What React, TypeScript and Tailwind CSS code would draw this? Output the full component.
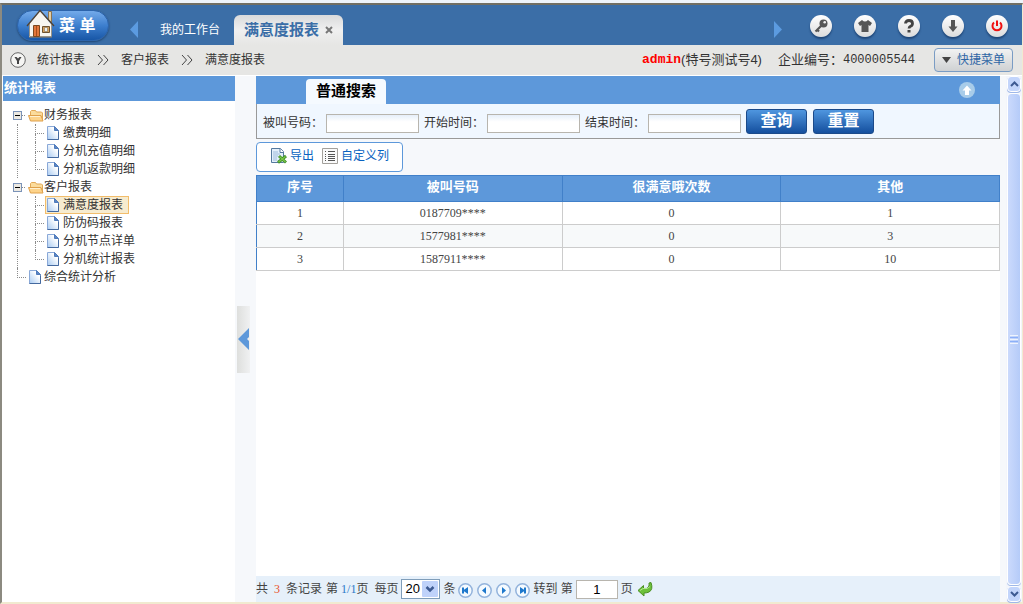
import { useState, type ReactNode } from 'react';

type Page = { id: string; name: string };
type Folder = { id: string; name: string; children: Page[] };

const folders: Folder[] = [
  {
    id: 'finance',
    name: '财务报表',
    children: [
      { id: 'payment', name: '缴费明细' },
      { id: 'recharge', name: '分机充值明细' },
      { id: 'refund', name: '分机返款明细' },
    ],
  },
  {
    id: 'customer',
    name: '客户报表',
    children: [
      { id: 'satisfaction', name: '满意度报表' },
      { id: 'anti-fake', name: '防伪码报表' },
      { id: 'node', name: '分机节点详单' },
      { id: 'extension', name: '分机统计报表' },
    ],
  },
];

const rows = [
  { id: 1, phone: '0187709****', satisfied: 0, other: 1 },
  { id: 2, phone: '1577981****', satisfied: 0, other: 3 },
  { id: 3, phone: '1587911****', satisfied: 0, other: 10 },
];

const filters = [
  { id: 'called', label: '被叫号码：' },
  { id: 'start', label: '开始时间：' },
  { id: 'end', label: '结束时间：' },
];

function HouseIcon() {
  return (
    <svg width="30" height="30" viewBox="0 0 30 30" aria-hidden="true">
      <path d="M22.500 2.500h3V14l-3-3z" fill="#e4cfa6" stroke="#8a7350" />
      <path d="M3 15 14 2l11 13v13H3z" fill="#f7f5ef" />
      <path d="M3.500 15v12.500h22V15" fill="none" stroke="#9a9488" />
      <path d="M1 17 14 1.500 28 17" fill="none" stroke="#4f4234" strokeWidth="1.300" />
      <path d="M7.500 16.500h6v11h-6z" fill="#e2763a" stroke="#7c4a22" />
      <path d="M10.500 17v10" stroke="#a94e1c" />
      <path d="M16.500 17.500h7v6h-7z" fill="#d9a158" stroke="#6d5231" />
      <path d="M18.500 18.500h3v4h-3z" fill="#e6eef5" stroke="#8a7350" strokeWidth=".6" />
      <path d="M3 28.500h23" stroke="#5d6d80" />
    </svg>
  );
}

function PageIcon() {
  return (
    <svg width="12" height="14" viewBox="0 0 12 14" className="shrink-0" aria-hidden="true">
      <defs>
        <linearGradient id="sheet" x1="1" y1="0" x2="0" y2="1">
          <stop offset="0.3" stopColor="#ffffff" />
          <stop offset="1" stopColor="#a9cbf2" />
        </linearGradient>
      </defs>
      <path d="M.5.5h7l4 4v9H.5z" fill="url(#sheet)" stroke="#8aa9d8" />
      <path d="M7.500.5v4h4z" fill="#5b86c4" stroke="#4f7abb" />
      <path d="M.5 13.500h11v-8" fill="none" stroke="#44699f" />
    </svg>
  );
}

function FolderIcon() {
  return (
    <svg width="16" height="13" viewBox="0 0 16 13" className="shrink-0" aria-hidden="true">
      <path d="M2.500 6V2.500l1-1h4l1 1.500h5l1 1V11" fill="#fbdc9c" stroke="#e3a956" />
      <path d="M.5 6.500h12.500l2 5.500H2.500z" fill="#fdd38a" stroke="#dfa04b" />
      <path d="M2 7.500h10" stroke="#fff1cf" />
    </svg>
  );
}

// vertical line with a branch to the right at half height
function Branch({ last = false, width }: { last?: boolean; width: string }) {
  return (
    <span className={`flex h-[18px] shrink-0 flex-col ${width}`}>
      <span className="h-[10px] border-b border-l border-dotted border-[#8c8c8c]" />
      {!last && <span className="h-2 border-l border-dotted border-[#8c8c8c]" />}
    </span>
  );
}

function RoundButton({ label, children }: { label: string; children: ReactNode }) {
  return (
    <button
      type="button"
      aria-label={label}
      className="flex size-[22px] items-center justify-center rounded-full bg-gradient-to-b from-white to-[#dcdcdc] shadow-[0_2px_2px_#1f4677]"
    >
      <svg width="16" height="16" viewBox="0 0 16 16" aria-hidden="true">
        {children}
      </svg>
    </button>
  );
}

function PagerButton({ label, d }: { label: string; d: string }) {
  return (
    <button type="button" aria-label={label} className="size-[15px]">
      <svg width="15" height="15" viewBox="0 0 15 15" aria-hidden="true">
        <circle cx="7.5" cy="7.5" r="6.7" fill="#f4faff" stroke="#93b3dc" strokeWidth="1.500" />
        <path d={d} fill="#1e78cc" />
      </svg>
    </button>
  );
}

function TopBar() {
  return (
    <header className="flex h-10 shrink-0 bg-[#3b6ea7] pl-[15px] pr-[14px]">
      <button
        type="button"
        className="mt-[5px] flex h-[31px] w-[92px] items-center rounded-full border border-[#2c64ac] bg-gradient-to-b from-[#73aaea] via-[#3d7fce] to-[#1756a6] pl-2 text-base font-bold text-white shadow-[0_1px_2px_#204672]"
      >
        <span className="-mt-1">
          <HouseIcon />
        </span>
        <span className="pl-[3px] whitespace-pre">菜 单</span>
      </button>
      <button type="button" aria-label="向左" className="ml-[21px] mt-2">
        <svg width="9" height="17" viewBox="0 0 9 17" aria-hidden="true">
          <path d="M8 0v17L0 8.500z" fill="#5c9be0" />
        </svg>
      </button>
      <nav className="flex flex-1 items-end">
        <a href="#workbench" className="ml-[21px] pb-1.5 text-xs leading-[18px] text-white">
          我的工作台
        </a>
        <div className="ml-[14px] flex h-[30px] items-center rounded-t-md bg-gradient-to-b from-[#d9dadb] via-[#f0f0f0] to-[#e6e6e4] pl-2.5 pr-2.5">
          <a href="#satisfaction" className="text-[15px] font-bold text-[#3b6ea7]">
            满意度报表
          </a>
          <button type="button" aria-label="关闭" className="ml-1.5">
            <svg width="8" height="8" viewBox="0 0 8 8" aria-hidden="true">
              <path d="m1 1 6 6M7 1 1 7" stroke="#777" strokeWidth="2" />
            </svg>
          </button>
        </div>
      </nav>
      <button type="button" aria-label="向右" className="mr-[28px] mt-2">
        <svg width="9" height="17" viewBox="0 0 9 17" aria-hidden="true">
          <path d="M1 0v17l8-8.500z" fill="#5c9be0" />
        </svg>
      </button>
      <div className="flex items-center gap-[22px] pt-0.5">
        <RoundButton label="修改密码">
          <path d="M9 7 2.500 13.500M3.500 11l2.500 2.500" stroke="#555" strokeWidth="2.200" fill="none" />
          <circle cx="10.500" cy="5.500" r="4" fill="#555" />
          <circle cx="11.700" cy="4.300" r="1.300" fill="#eee" />
        </RoundButton>
        <RoundButton label="更换皮肤">
          <path d="M5 2 1 5l2 3 1.500-1v7h7V7L13 8l2-3-4-3q-3 3-6 0z" fill="#555" />
        </RoundButton>
        <RoundButton label="帮助">
          <path d="M4.500 5.500q0-3 3.500-3t3.500 3q0 2-2 2.800Q8 9 8 10.500" fill="none" stroke="#444" strokeWidth="2.800" />
          <path d="M6.500 12h3v2.500h-3z" fill="#444" />
        </RoundButton>
        <RoundButton label="下载">
          <path d="M6 2h4v6.500h2.500L8 14 3.500 8.500H6z" fill="#555" />
        </RoundButton>
        <RoundButton label="退出">
          <path d="M5 4.500a4.500 4.500 0 1 0 6 0M8 2.500v5.500" fill="none" stroke="#f01010" strokeWidth="2" />
        </RoundButton>
      </div>
    </header>
  );
}

function Breadcrumb() {
  const arrow = (
    <svg width="12" height="10" viewBox="0 0 12 10" aria-hidden="true">
      <path d="m1 0 4.500 5L1 10M6.500 0 11 5l-4.500 5" fill="none" stroke="#444" />
    </svg>
  );
  return (
    <div className="flex h-[30px] shrink-0 items-center bg-[#e6e6e4] pl-2 pr-[9px] text-xs text-[#333]">
      <svg width="16" height="16" viewBox="0 0 16 16" aria-hidden="true">
        <circle cx="8" cy="8" r="7.300" fill="#f5f5f3" stroke="#666" />
        <path d="M4.500 5h2L8 6.500 9.500 5h2L9 9v3H7V9z" fill="#444" />
      </svg>
      <nav className="flex flex-1 items-center gap-3 pl-[11px]">
        <a href="#stat">统计报表</a>
        {arrow}
        <a href="#customer">客户报表</a>
        {arrow}
        <a href="#satisfaction">满意度报表</a>
      </nav>
      <div className="flex items-center text-[13px]">
        <b className="font-['Liberation_Mono','Noto_Sans_CJK_SC',monospace] text-[#f00]">admin</b>
        <span>(特号测试号4)</span>
        <span className="pl-4">企业编号：</span>
        <span className="font-['Liberation_Mono',monospace] text-xs">4000005544</span>
      </div>
      <button
        type="button"
        className="ml-[19px] flex h-6 items-center gap-1.5 rounded-sm border border-[#7a9cc4] bg-gradient-to-b from-[#f2f2f2] to-[#cfd1d3] px-[7px] text-[#2f66a5]"
      >
        <svg width="9" height="6" viewBox="0 0 9 6" aria-hidden="true">
          <path d="M0 0h9L4.500 6z" fill="#444" />
        </svg>
        快捷菜单
      </button>
    </div>
  );
}

function Sidebar() {
  const [selected, setSelected] = useState('satisfaction');
  const [closed, setClosed] = useState<string[]>([]);

  const toggle = (id: string) => {
    setClosed(closed.includes(id) ? closed.filter(item => item !== id) : [...closed, id]);
  };

  return (
    <aside className="w-[232px] shrink-0 bg-white">
      <h2 className="h-[25px] bg-[#5d98da] pl-px text-[13px] leading-6 font-bold text-white">统计报表</h2>
      <ul className="pt-[5px] text-xs leading-[18px] text-[#333]">
        {folders.map(folder => (
          <li key={folder.id}>
            <div className="flex h-[18px] items-center pl-2.5">
              <button
                type="button"
                aria-label={folder.name}
                onClick={() => toggle(folder.id)}
                className="flex size-[9px] items-center justify-center border border-[#7b93b8] bg-[#ece9e2]"
              >
                <span className="h-px w-[5px] bg-black" />
              </button>
              <span className="mr-[3px] w-[3px] border-t border-dotted border-[#8c8c8c]" />
              <FolderIcon />
              <span>{folder.name}</span>
            </div>
            {!closed.includes(folder.id) && (
              <ul>
                {folder.children.map((page, i) => (
                  <li key={page.id} className="flex h-[18px] pl-3.5">
                    <span className="w-[18px] border-l border-dotted border-[#8c8c8c]" />
                    <Branch width="w-[9px]" last={i === folder.children.length - 1} />
                    <a
                      href={`#${page.id}`}
                      onClick={() => setSelected(page.id)}
                      className={`ml-px flex h-[18px] items-center gap-1 border pl-px pr-[5px] leading-4 ${
                        selected === page.id ? 'border-[#f2bd6b] bg-[#f6ebcf]' : 'border-transparent'
                      }`}
                    >
                      <PageIcon />
                      {page.name}
                    </a>
                  </li>
                ))}
              </ul>
            )}
          </li>
        ))}
        <li className="flex h-[18px] items-center pl-3.5">
          <Branch width="w-[9px]" last />
          <a href="#analysis" className="flex items-center gap-[3px] pl-[3px]">
            <PageIcon />
            综合统计分析
          </a>
        </li>
      </ul>
    </aside>
  );
}

function SearchPanel() {
  return (
    <section>
      <div className="flex h-7 items-end bg-[#5d98da] pl-[50px] pr-[25px]">
        <h2 className="h-[25px] rounded-t-sm bg-[#f5faff] px-2.5 text-[15px] leading-[23px] font-bold text-black">
          普通搜索
        </h2>
        <button type="button" aria-label="收起" className="mb-1.5 ml-auto">
          <svg width="16" height="16" viewBox="0 0 16 16" aria-hidden="true">
            <circle cx="8" cy="8" r="8" fill="#a8cce9" />
            <path d="m8 3.500 4.500 5H10V13H6V8.500H3.500z" fill="#fff" />
          </svg>
        </button>
      </div>
      <form
        className="flex h-[35px] items-center border-x border-b border-[#999] bg-[#f0f7ff] pl-1.5 text-xs text-[#333]"
        onSubmit={e => e.preventDefault()}
      >
        {filters.map(filter => (
          <div key={filter.id} className="mr-[5px] flex items-center gap-[3px] pt-1">
            <label htmlFor={filter.id}>{filter.label}</label>
            <input
              id={filter.id}
              type="text"
              className="h-[19px] w-[93px] border border-[#b8b5ae] bg-gradient-to-b from-[#e6effa] to-white to-40% px-1"
            />
          </div>
        ))}
        <button
          type="submit"
          className="h-[25px] w-[61px] rounded-[3px] border border-[#1b4a8a] bg-gradient-to-b from-[#4f96df] to-[#144f9e] text-base leading-[22px] font-bold text-white"
        >
          查询
        </button>
        <button
          type="reset"
          className="ml-1.5 h-[25px] w-[61px] rounded-[3px] border border-[#1b4a8a] bg-gradient-to-b from-[#4f96df] to-[#144f9e] text-base leading-[22px] font-bold text-white"
        >
          重置
        </button>
      </form>
    </section>
  );
}

function Toolbar() {
  return (
    <div className="my-[3px] flex h-[30px] w-[147px] items-center rounded-[4px] border border-[#5d98da] bg-white pb-0.5 pl-3.5 text-xs text-[#0a62c0]">
      <button type="button" className="flex items-center gap-[3px]">
        <svg width="16" height="16" viewBox="0 0 16 16" aria-hidden="true">
          <path d="M.5.5h9l3 3v11H.5z" fill="#e3effb" stroke="#55799e" />
          <path d="M9 .5v4h4" fill="#fff" stroke="#55799e" />
          <path d="M2 4h5M2 6h7M2 8h5M2 10h4M2 12h4" stroke="#9dbbdb" />
          <path d="m8 8 7 6.500M15 8l-8 6.500" stroke="#3f8f28" strokeWidth="3" />
          <path d="m8.500 8.500 6 5.500M14.500 8.500l-7 5.500" stroke="#7cc74a" strokeWidth="1.200" />
        </svg>
        导出
      </button>
      <button type="button" className="ml-2 flex items-center gap-[3px]">
        <svg width="16" height="16" viewBox="0 0 16 16" aria-hidden="true">
          <path d="M.5.5h15v15H.5z" fill="#fafafa" stroke="#a3a09b" />
          <path d="M3 3.500h1M3 6.500h1M3 8.500h1M3 10.500h1M3 12.500h1M6 3.500h7M6 6.500h7M6 8.500h7M6 10.500h7M6 12.500h7" stroke="#555" />
        </svg>
        自定义列
      </button>
    </div>
  );
}

function ReportTable() {
  return (
    <table className="w-full table-fixed border-collapse text-center text-xs text-[#444]">
      <colgroup>
        <col className="w-[87px]" />
        <col />
        <col />
        <col />
      </colgroup>
      <thead>
        <tr className="h-[26px] bg-[#5d98da] text-[13px] text-white">
          {['序号', '被叫号码', '很满意哦次数', '其他'].map(title => (
            <th key={title} className="border border-[#4180c9] p-0 pb-1 leading-5 font-bold">
              {title}
            </th>
          ))}
        </tr>
      </thead>
      <tbody className="bg-white font-['Liberation_Serif',serif]">
        {rows.map(row => (
          <tr key={row.id} className="h-[23px] even:bg-[#f7f9fa]">
            <td className="border border-[#ccc] border-l-[#4180c9] p-0">{row.id}</td>
            <td className="border border-[#ccc] p-0">{row.phone}</td>
            <td className="border border-[#ccc] p-0">{row.satisfied}</td>
            <td className="border border-[#ccc] p-0">{row.other}</td>
          </tr>
        ))}
      </tbody>
    </table>
  );
}

function Pager() {
  return (
    <footer className="flex h-[26px] shrink-0 items-center bg-[#e6f0fa] text-xs text-[#444]">
      <span>共</span>
      <span className="px-1.5 font-['Liberation_Serif',serif] text-[#e8532b]">3</span>
      <span>条记录</span>
      <span className="pl-1">第</span>
      <span className="pl-[3px] font-['Liberation_Serif',serif] text-[#2a78c8]">1/1</span>
      <span>页</span>
      <label htmlFor="page-size" className="pl-1.5">
        每页
      </label>
      <div className="relative ml-[3px]">
        <select
          id="page-size"
          className="block h-5 w-[39px] appearance-none border border-[#7f9db9] bg-white pl-[3px] font-['Liberation_Sans',sans-serif] text-[13px] leading-[18px] text-black"
        >
          <option>20</option>
          <option>50</option>
        </select>
        <svg
          width="16"
          height="16"
          viewBox="0 0 16 16"
          className="pointer-events-none absolute top-0.5 right-0.5"
          aria-hidden="true"
        >
          <rect width="16" height="16" rx="1" fill="#bfd2fa" />
          <path d="m4.500 6 3.500 3.500L11.500 6" fill="none" stroke="#3d5a92" strokeWidth="2.500" />
        </svg>
      </div>
      <span className="pl-[3px]">条</span>
      <div className="flex gap-1 px-[3px] pt-0.5">
        <PagerButton label="首页" d="M4 4.500h2v2.200l4-2.700v7L6 8.300v2.200H4z" />
        <PagerButton label="上一页" d="M9 4v7L5 7.500z" />
        <PagerButton label="下一页" d="M6 4v7l4-3.500z" />
        <PagerButton label="末页" d="M11 4.500H9v2.200L5 4v7l4-2.700v2.200h2z" />
      </div>
      <label htmlFor="page-no">转到 第</label>
      <input
        id="page-no"
        type="text"
        defaultValue="1"
        className="mx-[3px] h-[19px] w-[42px] border border-[#b8b5ae] bg-white text-center font-['Liberation_Sans',sans-serif] text-[13px] text-black"
      />
      <span>页</span>
      <button type="button" aria-label="跳转" className="ml-1">
        <svg width="16" height="16" viewBox="0 0 16 16" aria-hidden="true">
          <path d="M14 1.500q2.500 7-2 9.500-2 1-5 1v3L1 9.500 6.500 4.500v3q4 .5 5-1.500 1-2 .5-4z" fill="#6cc03a" stroke="#4b8f24" />
          <path d="M3 9.500 6 7.500q5 1 7-2" fill="none" stroke="#b5e88f" />
        </svg>
      </button>
    </footer>
  );
}

function ScrollRail() {
  const button =
    'flex h-4 shrink-0 items-center justify-center rounded-sm border border-white bg-[#c3d5fb] shadow-[0_1px_0_#9fb8e8]';
  return (
    <div className="flex w-4 shrink-0 flex-col gap-px bg-[#f3f5fb] px-px">
      <button type="button" aria-label="向上滚动" className={button}>
        <svg width="9" height="6" viewBox="0 0 9 6" aria-hidden="true">
          <path d="m1 5 3.500-3.500L8 5" fill="none" stroke="#3d5a92" strokeWidth="2" />
        </svg>
      </button>
      <div className="flex flex-1 flex-col items-center justify-center gap-px rounded-sm border border-white bg-gradient-to-r from-[#cbdafc] to-[#b5cbf8] shadow-[0_1px_0_#9fb8e8]">
        <span className="h-px w-2 bg-[#eef4fe]" />
        <span className="h-px w-2 bg-[#8cb0f8]" />
        <span className="h-px w-2 bg-[#eef4fe]" />
        <span className="h-px w-2 bg-[#8cb0f8]" />
        <span className="h-px w-2 bg-[#eef4fe]" />
      </div>
      <button type="button" aria-label="向下滚动" className={button}>
        <svg width="9" height="6" viewBox="0 0 9 6" aria-hidden="true">
          <path d="m1 1 3.500 3.500L8 1" fill="none" stroke="#3d5a92" strokeWidth="2" />
        </svg>
      </button>
    </div>
  );
}

export default function App() {
  return (
    <div className="flex h-screen flex-col bg-[#eef4fb] pt-[3px] font-['Liberation_Sans','Noto_Sans_CJK_SC',sans-serif]">
      <div className="flex min-h-0 flex-1 flex-col border-t-2 border-r border-b-2 border-l-2 border-t-[#716f64] border-r-[#f1ead0] border-b-[#f1ead0] border-l-[#8c8a80] bg-[#f6f8fb]">
        <TopBar />
        <Breadcrumb />
        <div className="flex min-h-0 flex-1 border-t border-l border-white">
          <Sidebar />
          <div className="flex w-[21px] shrink-0 items-center pl-0.5">
            <button
              type="button"
              aria-label="收起侧栏"
              className="flex h-[67px] w-[13px] items-center bg-gradient-to-r from-[#dedfdd] to-[#f0f1f2]"
            >
              <svg width="13" height="22" viewBox="0 0 13 22" aria-hidden="true">
                <path d="M12 0v9l-2 2 2 2v9L1 11z" fill="#5d98da" />
              </svg>
            </button>
          </div>
          <main className="flex min-w-0 flex-1 flex-col">
            <SearchPanel />
            <Toolbar />
            <ReportTable />
            <div className="flex-1 bg-white" />
            <Pager />
          </main>
          <div className="w-1.5 shrink-0" />
          <ScrollRail />
        </div>
      </div>
    </div>
  );
}
